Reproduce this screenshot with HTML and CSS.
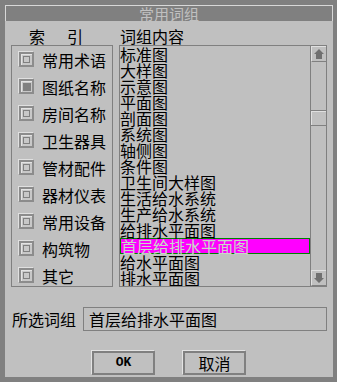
FILE: index.html
```html
<!DOCTYPE html>
<html>

<head lang="zh">
    <meta charset="UTF-8">
    <title>常用词组</title>
    <link rel="stylesheet" href="styles.css">
</head>

<body>

    <div class="dlg">
        <div class="dlg-title">常用词组</div>

        <div class="dlg-body">
            <div class="dlg-heads">
                <div class="head-index">索引</div>
                <div class="head-words">词组内容</div>
            </div>

            <div class="dlg-main">
                <!-- 左侧索引 -->
                <div class="index-box">
                    <div class="index-row"><span class="chk"></span>常用术语</div>
                    <div class="index-row"><span class="chk chk-on"></span>图纸名称</div>
                    <div class="index-row"><span class="chk"></span>房间名称</div>
                    <div class="index-row"><span class="chk"></span>卫生器具</div>
                    <div class="index-row"><span class="chk"></span>管材配件</div>
                    <div class="index-row"><span class="chk"></span>器材仪表</div>
                    <div class="index-row"><span class="chk"></span>常用设备</div>
                    <div class="index-row"><span class="chk"></span>构筑物</div>
                    <div class="index-row"><span class="chk"></span>其它</div>
                </div>

                <!-- 右侧词组列表 -->
                <div class="word-box">
                    <ul class="word-list">
                        <li>标准图</li>
                        <li>大样图</li>
                        <li>示意图</li>
                        <li>平面图</li>
                        <li>剖面图</li>
                        <li>系统图</li>
                        <li>轴侧图</li>
                        <li>条件图</li>
                        <li>卫生间大样图</li>
                        <li>生活给水系统</li>
                        <li>生产给水系统</li>
                        <li>给排水平面图</li>
                        <li class="sel">首层给排水平面图</li>
                        <li>给水平面图</li>
                        <li>排水平面图</li>
                    </ul>
                    <div class="scroll">
                        <div class="scroll-btn">
                            <svg width="12" height="10" viewBox="0 0 12 10"><polygon points="6,0 11,5 9,5 9,10 3,10 3,5 1,5" fill="#707070"/></svg>
                        </div>
                        <div class="scroll-track">
                            <div class="scroll-thumb"></div>
                        </div>
                        <div class="scroll-btn">
                            <svg width="12" height="10" viewBox="0 0 12 10"><polygon points="6,10 11,5 9,5 9,0 3,0 3,5 1,5" fill="#707070"/></svg>
                        </div>
                    </div>
                </div>
            </div>

            <div class="dlg-picked">
                <label>所选词组</label>
                <div class="picked-input">首层给排水平面图</div>
            </div>

            <div class="dlg-buttons">
                <a href="javascript:void(0);" class="btn btn-ok">OK</a>
                <a href="javascript:void(0);" class="btn">取消</a>
            </div>
        </div>
    </div>

</body>

</html>
```

FILE: styles.css
```css
html,
body,
ul,
li,
div,
span,
label,
a {
    padding: 0px;
    margin: 0px;
}

body {
    background: #808080;
    font-family: "Noto Sans CJK SC", "Noto Sans", sans-serif;
    font-size: 16px;
    line-height: 16px;
    color: #000000;
}

ul {
    list-style: none;
}

a {
    text-decoration: none;
    color: #000000;
}

.dlg {
    width: 328px;
    height: 372px;
    margin: 5px 4px 5px 5px;
    display: flex;
    flex-direction: column;
}

.dlg-title {
    height: 15px;
    border: #d8d8d8 solid 1px;
    border-bottom: none;
    background: #808080;
    color: #c0c0c0;
    font-size: 15px;
    line-height: 15px;
    text-align: center;
}

.dlg-body {
    flex: 1;
    background: #c0c0c0;
    padding: 7px 6px 0px 6px;
}

.dlg-heads {
    display: flex;
    height: 17px;
}

.head-index {
    width: 90px;
    padding-left: 18px;
    letter-spacing: 22px;
    white-space: nowrap;
}

.head-words {
    padding-left: 1px;
}

.dlg-main {
    display: flex;
    gap: 6px;
    height: 242px;
}

.index-box {
    width: 100px;
    height: 240px;
    border: #808080 solid 1px;
    display: grid;
    grid-template-rows: repeat(9, 27px);
    align-content: start;
}

.index-row {
    display: flex;
    align-items: center;
    padding-left: 7px;
    gap: 8px;
    height: 27px;
}

.chk {
    width: 11px;
    height: 11px;
    border: #8c8c8c solid 2px;
    box-shadow: -1px -1px 0px #e0e0e0, inset 1px 1px 0px #e4e4e4;
    background: #c8c8c8;
    display: flex;
    align-items: center;
    justify-content: center;
    flex-shrink: 0;
}

.chk::after {
    content: "";
    width: 5px;
    height: 5px;
    border: #808080 solid 1px;
}

.chk-on::after {
    width: 8px;
    height: 8px;
    border: none;
    background: #808080;
}

.word-box {
    width: 206px;
    height: 240px;
    border: #808080 solid 1px;
    display: flex;
}

.word-list {
    flex: 1;
    overflow: hidden;
    white-space: nowrap;
}

.word-list li {
    height: 16px;
    line-height: 16px;
}

.word-list li.sel {
    height: 14px;
    line-height: 14px;
    border: #008000 solid 1px;
    background: #ff00ff;
    color: #c8d8c8;
}

.scroll {
    width: 15px;
    border-left: #808080 solid 1px;
    display: flex;
    flex-direction: column;
}

.scroll-btn {
    height: 14px;
    border-top: #e0e0e0 solid 1px;
    border-left: #e0e0e0 solid 1px;
    border-bottom: #808080 solid 1px;
    display: flex;
    align-items: center;
    justify-content: center;
}

.scroll-track {
    flex: 1;
    padding-top: 48px;
}

.scroll-thumb {
    height: 14px;
    border-top: #808080 solid 1px;
    border-bottom: #808080 solid 1px;
    box-shadow: inset 1px 1px 0px #e0e0e0;
}

.dlg-picked {
    display: flex;
    align-items: center;
    margin-top: 20px;
    padding-left: 1px;
    gap: 7px;
}

.picked-input {
    width: 237px;
    height: 22px;
    line-height: 22px;
    border: #808080 solid 1px;
    padding-left: 5px;
}

.dlg-buttons {
    display: flex;
    justify-content: center;
    gap: 28px;
    margin-top: 20px;
}

.btn {
    display: block;
    width: 59px;
    height: 20px;
    line-height: 20px;
    border: #808080 solid 2px;
    box-shadow: -1px -1px 0px #e4e4e4;
    text-align: center;
}

.btn-ok {
    font-family: "Liberation Mono", monospace;
    font-weight: bold;
    font-size: 13px;
}
```
